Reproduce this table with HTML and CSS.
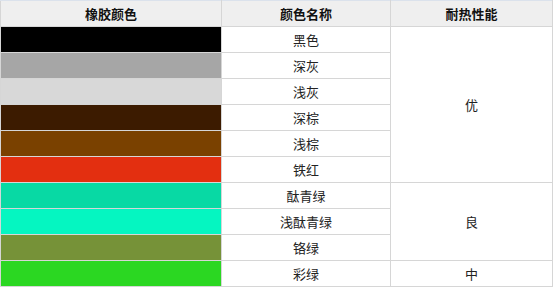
FILE: index.html
```html
<!DOCTYPE html>
<html lang="zh">
<head>
<meta charset="utf-8">
<link rel="stylesheet" href="styles.css">
</head>
<body>
<table class="rubber">
  <colgroup>
    <col class="c1">
    <col class="c2">
    <col class="c3">
  </colgroup>
  <thead>
    <tr><th>橡胶颜色</th><th>颜色名称</th><th>耐热性能</th></tr>
  </thead>
  <tbody>
    <tr><td class="sw black"></td><td>黑色</td><td rowspan="6">优</td></tr>
    <tr><td class="sw gray"></td><td>深灰</td></tr>
    <tr><td class="sw lgray"></td><td>浅灰</td></tr>
    <tr><td class="sw dbrown"></td><td>深棕</td></tr>
    <tr><td class="sw brown"></td><td>浅棕</td></tr>
    <tr><td class="sw red"></td><td>铁红</td></tr>
    <tr><td class="sw teal"></td><td>酞青绿</td><td rowspan="3">良</td></tr>
    <tr><td class="sw aqua"></td><td>浅酞青绿</td></tr>
    <tr><td class="sw olive"></td><td>铬绿</td></tr>
    <tr><td class="sw green"></td><td>彩绿</td><td>中</td></tr>
  </tbody>
</table>
</body>
</html>
```
FILE: styles.css
```css
html, body {
  margin: 0;
  padding: 0;
  background: #fff;
}
.rubber {
  border-collapse: collapse;
  table-layout: fixed;
  width: 552px;
  font-family: "Noto Sans CJK SC", "Noto Sans", sans-serif;
  font-size: 13px;
  color: #222;
}
.c1 { width: 221px; }
.c2 { width: 169px; }
.c3 { width: 162px; }
.rubber th, .rubber td {
  border: 1px solid #d6d6d6;
  padding: 0;
  height: 25px;
  text-align: center;
  vertical-align: middle;
  line-height: 16px;
}
.rubber th {
  background: #efefef;
  font-weight: bold;
  color: #111;
  border-top-color: #dbe2ec;
}
.black { background: #000000; }
.gray { background: #a6a6a6; }
.lgray { background: #d8d8d8; }
.dbrown { background: #3c1b00; }
.brown { background: #7a4100; }
.red { background: #e32f10; }
.teal { background: #08d9a4; }
.aqua { background: #05f6c1; }
.olive { background: #769238; }
.green { background: #2bd722; }
```
